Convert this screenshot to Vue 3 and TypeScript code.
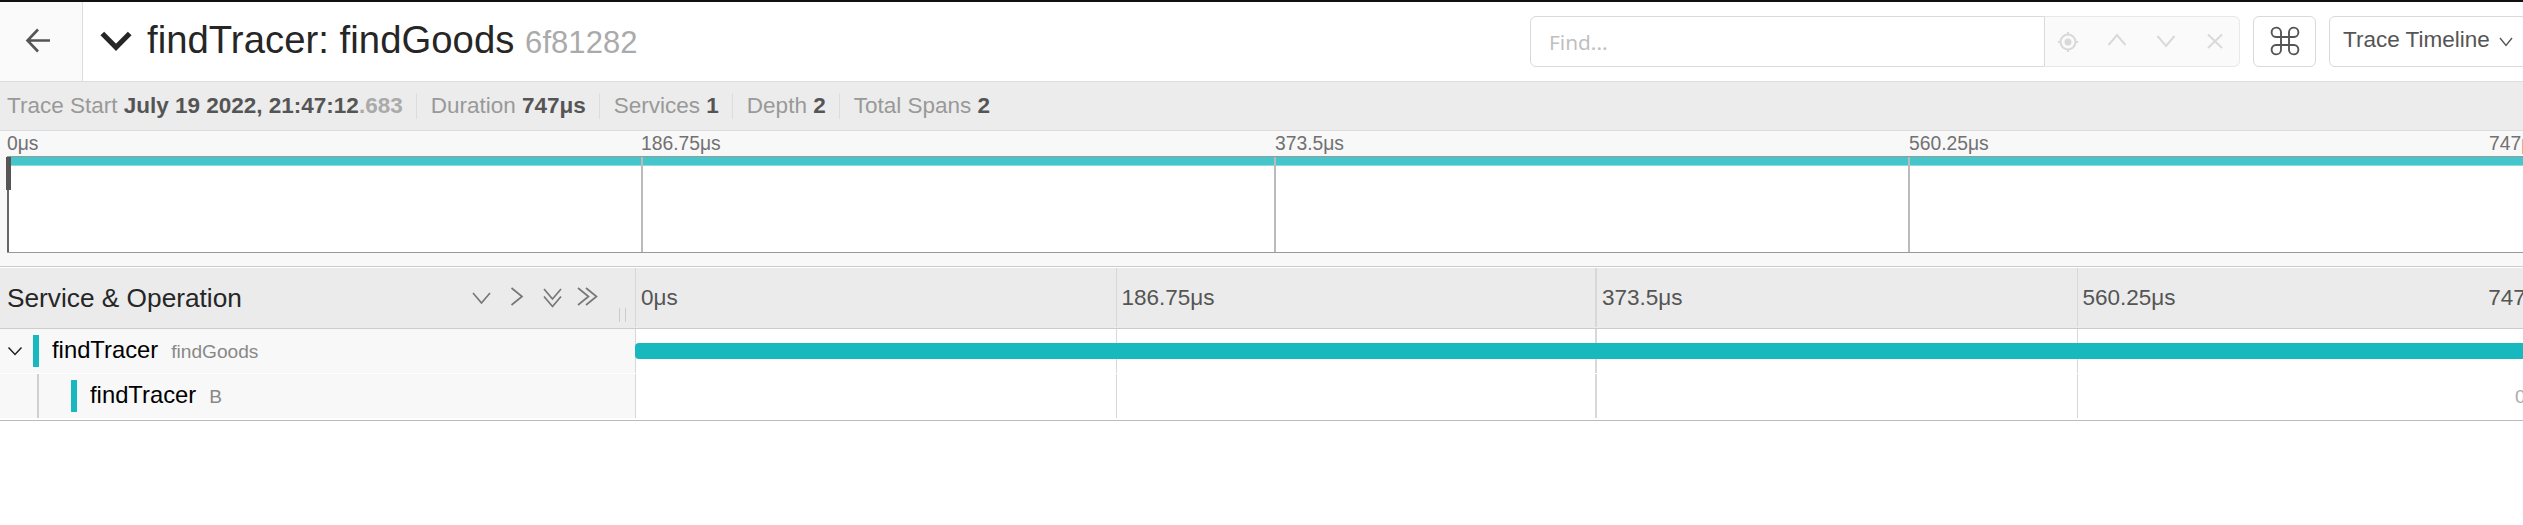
<script setup lang="ts">
interface Stat { label: string; value: string; fraction?: string }
interface Span { service: string; operation: string; depth: number; hasChildren: boolean }

const stats: Stat[] = [
  { label: 'Trace Start', value: 'July 19 2022, 21:47:12', fraction: '.683' },
  { label: 'Duration', value: '747μs' },
  { label: 'Services', value: '1' },
  { label: 'Depth', value: '2' },
  { label: 'Total Spans', value: '2' },
]
const ticks: string[] = ['0μs', '186.75μs', '373.5μs', '560.25μs']
const endTick = '747μs'
const spans: Span[] = [
  { service: 'findTracer', operation: 'findGoods', depth: 0, hasChildren: true },
  { service: 'findTracer', operation: 'B', depth: 1, hasChildren: false },
]
</script>

<template>
  <div class="viewport">
    <div class="page">
      <header class="header">
        <a class="back">
          <svg width="26" height="26" viewBox="0 0 26 26"><path d="M13 1.500 2.500 12.500 13 23.500M2.500 12.500H25" /></svg>
        </a>
        <svg class="title-chevron" width="34" height="22" viewBox="0 0 34 22"><path d="M3.300 2.500 17 16.300 30.700 2.500" /></svg>
        <h1 class="title">findTracer: findGoods <small>6f81282</small></h1>
        <div class="search">
          <div class="find">Find...</div>
          <div class="search-tools">
            <svg width="20" height="22" viewBox="0 0 20 22"><circle cx="10" cy="11" r="7.500" /><circle class="dot" cx="10" cy="11" r="3.500" /><path d="M10 1v3M10 18v3M0 11h3M17 11h3" /></svg>
            <svg width="20" height="22" viewBox="0 0 20 22"><path d="m1.500 14 8.500-10 8.500 10" /></svg>
            <svg width="20" height="22" viewBox="0 0 20 22"><path d="m1.500 5 8.500 10 8.500-10" /></svg>
            <svg width="20" height="22" viewBox="0 0 20 22"><path d="m3 3.500 14 13.500M17 3.500 3 17" /></svg>
          </div>
        </div>
        <button class="btn shortcut">
          <svg width="30" height="30" viewBox="0 0 30 30"><path d="M11 11H6a4.700 4.700 0 1 1 5-5v18a4.700 4.700 0 1 1-5-5h18a4.700 4.700 0 1 1-5 5V6a4.700 4.700 0 1 1 5 5Z" /></svg>
        </button>
        <button class="btn view">Trace Timeline
          <svg width="14" height="12" viewBox="0 0 14 12"><path d="m1 2 6 7.500L13 2" /></svg>
        </button>
      </header>

      <div class="stats">
        <div v-for="s in stats" :key="s.label" class="stat">{{ s.label }} <strong>{{ s.value }}<span v-if="s.fraction">{{ s.fraction }}</span></strong></div>
      </div>

      <section class="minimap">
        <div class="map-ticks">
          <span v-for="t in ticks" :key="t">{{ t }}</span>
          <span class="end">{{ endTick }}</span>
        </div>
        <div class="map-graph">
          <div v-for="t in ticks" :key="t" class="map-cell"></div>
          <div class="map-span"></div>
          <div class="scrubber"></div>
        </div>
      </section>

      <section class="timeline">
        <div class="row head">
          <div class="name-col">
            <span class="head-title">Service &amp; Operation</span>
            <svg class="collapsers" width="126" height="22" viewBox="0 0 126 22"><path d="m1 6 8.500 10L18 6M39.500 1 50 9.500l-10.500 8.500M72 2l8.500 10L89 2M72 9.500l8.500 10 8.500-10M106 1l10.500 8.500L106 18M114 1l10.500 8.500L114 18" /></svg>
            <div class="resizer"></div>
          </div>
          <div class="cells">
            <div v-for="t in ticks" :key="t" class="cell">{{ t }}</div>
            <span class="end">{{ endTick }}</span>
          </div>
        </div>
        <div v-for="(s, i) in spans" :key="i" class="row span-row" :class="{ child: s.depth > 0 }">
          <div class="name-col">
            <div class="indent">
              <svg v-if="s.hasChildren" width="16" height="12" viewBox="0 0 16 12"><path d="m1.500 2.500 6.500 7 6.500-7" /></svg>
            </div>
            <i class="color-bar"></i>
            <span class="service">{{ s.service }}</span>
            <small class="operation">{{ s.operation }}</small>
          </div>
          <div class="cells">
            <div v-for="t in ticks" :key="t" class="cell"></div>
            <div v-if="s.depth === 0" class="bar"></div>
            <span v-else class="bar-label">0μs</span>
          </div>
        </div>
      </section>
    </div>
  </div>
</template>

<style>
html, body { background: #fff; overflow: hidden; }
</style>

<style scoped>
* { box-sizing: border-box; }
.viewport { width: 100%; height: 525px; overflow: hidden; font-family: "Liberation Sans", Arial, sans-serif; font-size: 22.5px; color: #262626; }
.page { width: 2557px; border-top: 2px solid #111; }
svg { display: block; fill: none; flex: none; }
.header { height: 80px; display: flex; align-items: center; border-bottom: 1px solid #ddd; }
.back { width: 83px; height: 79px; background: #fafafa; border-right: 1px solid #ddd; display: flex; align-items: center; padding: 0 0 1px 24.5px; }
.back svg { stroke: #555; stroke-width: 2.600; }
.title-chevron { margin: 1px 0 0 16px; stroke: #262626; stroke-width: 5.200; }
.title { margin: 0 0 0 14px; font-size: 38.25px; letter-spacing: 0.05px; font-weight: 400; line-height: 50px; white-space: nowrap; width: 1383px; }
.title small { font-size: 31px; color: #aaa; }
.search { display: flex; width: 710px; height: 51px; }
.find { width: 515px; border: 1px solid #d9d9d9; border-radius: 6px 0 0 6px; padding: 0 0 0 18px; line-height: 50px; font-family: "Noto Sans", "Open Sans", sans-serif; font-size: 20.800px; color: #bfbfbf; }
.search-tools { width: 195px; border: 1px solid #e8e8e8; border-left: 0; border-radius: 0 6px 6px 0; background: #fafafa; display: flex; align-items: center; gap: 29px; padding-left: 13px; }
.search-tools svg { stroke: #d9d9d9; stroke-width: 2; }
.search-tools .dot { fill: #d9d9d9; stroke: none; }
.btn { height: 51px; border: 1px solid #d9d9d9; border-radius: 6px; background: #fff; display: flex; align-items: center; padding: 0; color: #555; font: inherit; flex: none; }
.shortcut { width: 63px; margin-left: 13px; justify-content: center; padding-bottom: 2px; }
.shortcut svg { stroke: #555; stroke-width: 1.900; }
.view { margin-left: 13px; width: 220px; padding-left: 13px; padding-bottom: 3px; gap: 9px; white-space: nowrap; }
.view svg { stroke: #555; stroke-width: 1.400; margin-top: 3px; }

.stats { height: 49px; background: #ececec; border-bottom: 1px solid #ddd; display: flex; align-items: center; padding-left: 7px; color: #999; white-space: nowrap; }
.stat { line-height: 26px; padding-right: 13.500px; margin-right: 13.500px; border-right: 1px solid #ddd; }
.stat:last-child { border: 0; }
.stat strong { color: #555; }
.stat strong span { color: #aaa; }

.minimap { height: 136px; background: #f8f8f8; border-bottom: 1px solid #ccc; padding-left: 7px; }
.map-ticks { height: 25px; width: 2536px; display: grid; grid-template-columns: repeat(4, 1fr); font-size: 19.300px; line-height: 26px; color: #717171; position: relative; }
.end { position: absolute; right: 0; }
.map-ticks .end { right: 1px; }
.map-graph { position: relative; width: 2534.500px; height: 97px; border: solid #999; border-width: 1px 0; background: #fff; display: grid; grid-template-columns: repeat(4, 1fr); }
.map-cell { border-left: 2px solid #bbb; z-index: 1; }
.map-span { position: absolute; inset: 0 0 auto; height: 9px; background: #45c6cb; border-bottom: 1px solid #8bdbde; }
.scrubber { position: absolute; z-index: 2; left: 0; top: 0; width: 2px; height: 95px; background: #666; }
.scrubber::before { content: ""; position: absolute; left: -1px; top: 0; width: 5px; height: 33px; background: #555; }

.timeline { padding-top: 1px; border-bottom: 1px solid #bbb; height: 154px; }
.row { display: flex; }
.name-col { width: 635px; display: flex; align-items: center; flex: none; position: relative; }
.cells { width: 1922px; display: grid; grid-template-columns: repeat(4, 1fr); position: relative; }
.cell { border-left: 1px solid #d8d8d8; }
.cell:nth-child(3) { border-left-width: 2px; margin-left: -1px; }
.head { height: 61px; background: #ebebeb; border-bottom: 1px solid #ccc; }
.head .cell { line-height: 59px; padding-left: 5px; color: #555; margin-bottom: 1px; }
.head .end { line-height: 59px; color: #555; right: 7px; }
.head-title { font-size: 26.250px; width: 472px; padding-left: 7px; white-space: nowrap; flex: none; }
.collapsers { stroke: #777; stroke-width: 1.700; }
.resizer { position: absolute; left: 619px; bottom: 6px; width: 7px; height: 14px; border: solid #ccc; border-width: 0 1px; }
.span-row { height: 45px; }
.span-row .name-col { background: #f8f8f8; height: 44px; }
.span-row .cells { height: 44px; }
.indent { width: 33px; padding-left: 7px; flex: none; }
.indent svg { stroke: #222; stroke-width: 1.500; }
.child .indent { width: 34px; height: 44px; border-left: 2px solid #d0d0d0; margin-left: 37px; }
.color-bar { width: 6px; height: 32px; background: #17b8be; }
.service { color: #000; font-size: 23.800px; margin-left: 13px; line-height: 40px; padding-bottom: 2px; }
.operation { color: #888; font-size: 19.125px; margin-left: 13px; padding-top: 1px; }
.bar { position: absolute; left: 0; top: 14px; width: 100%; height: 16px; background: #17b8be; border-radius: 4px; }
.bar-label { position: absolute; left: 1880px; top: 12px; font-size: 19px; line-height: 22px; color: #aaa; }
</style>
